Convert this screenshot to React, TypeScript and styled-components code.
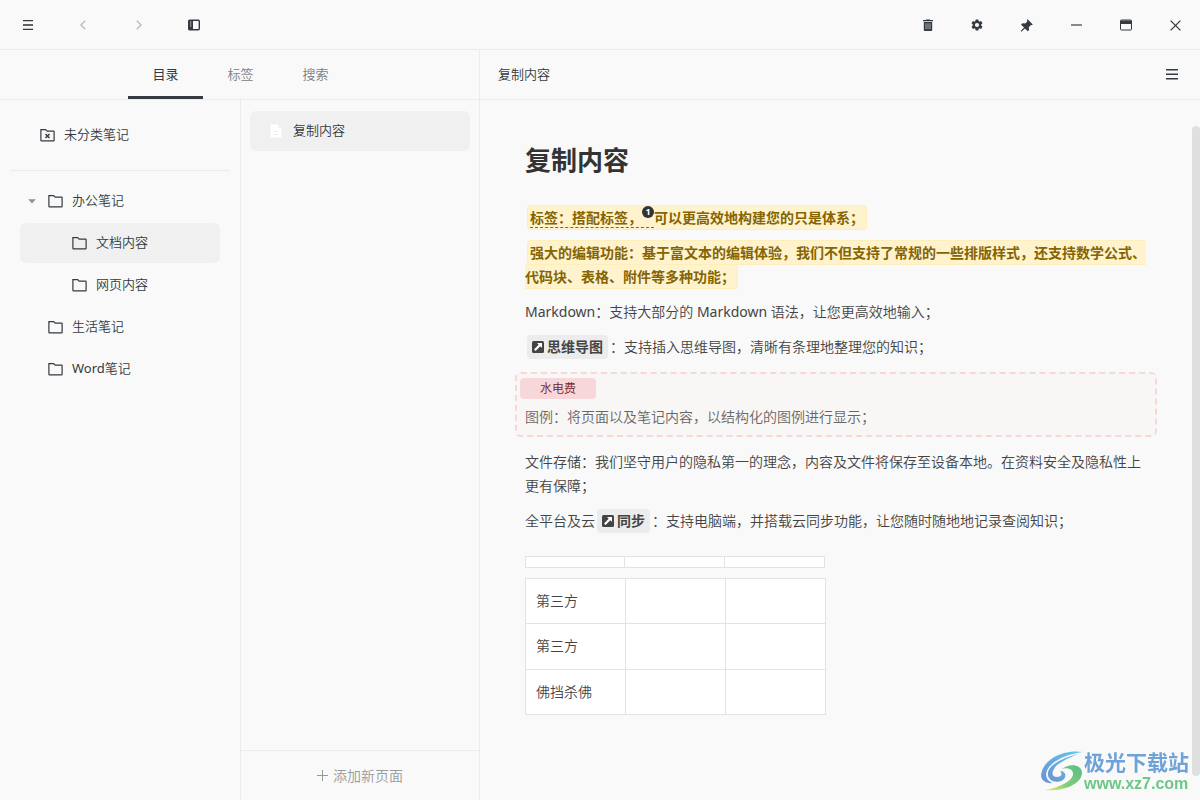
import React from "react";
import styled, { createGlobalStyle } from "styled-components";

const Global = createGlobalStyle`
  *, *::before, *::after { box-sizing: border-box; }
  html, body, #root { height: 100%; }
  body {
    margin: 0;
    background: #f9f9f9;
    color: #343a40;
    font: 350 13px/20px "Noto Sans", "Noto Sans CJK SC", sans-serif;
    overflow: hidden;
  }
  button {
    font: inherit;
    color: inherit;
    background: none;
    border: 0;
    padding: 0;
    cursor: pointer;
  }
  a { color: inherit; text-decoration: none; }
  svg { display: block; flex: none; }
`;

const line = "#ebebeb";

const Shell = styled.div`
  height: 100vh;
  display: flex;
  flex-direction: column;
`;

const TitleBar = styled.header`
  display: flex;
  justify-content: space-between;
  flex: none;
  height: 50px;
  border-bottom: 1px solid ${line};
`;

const ButtonGroup = styled.div`
  display: flex;
  align-items: center;
  gap: 6px;
`;

const WindowControls = styled.div`
  flex: 0 0 297px;
  display: grid;
  grid-template-columns: repeat(6, 1fr);
  justify-items: center;
`;

const IconButton = styled.button<{ $width?: number; $muted?: boolean }>`
  width: ${(p) => p.$width ?? 48}px;
  height: 50px;
  display: flex;
  align-items: center;
  justify-content: center;
  color: ${(p) => (p.$muted ? "#bcbec0" : "#343a40")};
`;

const Body = styled.div`
  flex: 1;
  min-height: 0;
  display: flex;
`;

const Navigator = styled.div`
  flex: 0 0 480px;
  display: flex;
  flex-direction: column;
  border-right: 1px solid ${line};
`;

const Tabs = styled.div`
  flex: none;
  height: 50px;
  display: flex;
  justify-content: center;
  padding-left: 2px;
  border-bottom: 1px solid ${line};
`;

const Tab = styled.button<{ $active?: boolean }>`
  width: 75px;
  border-bottom: 3px solid ${(p) => (p.$active ? "#343a40" : "transparent")};
  border-top: 2px solid transparent;
  color: ${(p) => (p.$active ? "#343a40" : "#7a7e83")};
  font-weight: ${(p) => (p.$active ? 400 : 350)};
`;

const Panels = styled.div`
  flex: 1;
  min-height: 0;
  display: flex;
`;

const Sidebar = styled.nav`
  flex: 0 0 241px;
  border-right: 1px solid ${line};
`;

const SidebarTop = styled.div`
  margin: 0 10px;
  padding: 15px 10px;
  border-bottom: 1px solid ${line};
`;

const Tree = styled.ul`
  list-style: none;
  margin: 0;
  padding: 10px 20px;
  display: flex;
  flex-direction: column;
  gap: 2px;
`;

const TreeRow = styled.button<{ $depth?: number; $active?: boolean }>`
  width: 100%;
  height: 40px;
  display: flex;
  align-items: center;
  gap: 9px;
  padding-left: ${(p) => 3 + (p.$depth ?? 0) * 24}px;
  border-radius: 6px;
  background: ${(p) => (p.$active ? "#f0f0f0" : "transparent")};
`;

const UncategorisedRow = styled(TreeRow)`
  padding-left: 20px;
`;

const Label = styled.span`
  padding-bottom: 2px;
`;

const Latin = styled.span`
  font-weight: 400;
`;

const Caret = styled.span<{ $shown?: boolean }>`
  width: 18px;
  display: flex;
  justify-content: center;
  margin-right: -2px;
  visibility: ${(p) => (p.$shown ? "visible" : "hidden")};
`;

const PageColumn = styled.section`
  flex: 1;
  display: flex;
  flex-direction: column;
`;

const PageList = styled.div`
  flex: 1;
  padding: 11px 9px;
`;

const PageItem = styled.button`
  width: 100%;
  height: 40px;
  padding: 0 17px;
  display: flex;
  align-items: center;
  gap: 8px;
  border-radius: 6px;
  background: #f0f0f0;
`;

const AddPage = styled.button`
  flex: none;
  height: 50px;
  display: flex;
  align-items: center;
  justify-content: center;
  gap: 5px;
  border-top: 1px solid ${line};
  color: #999999;
  font-size: 14px;
`;

const Main = styled.main`
  flex: 1;
  min-width: 0;
  display: flex;
  flex-direction: column;
`;

const PageBar = styled.div`
  flex: none;
  height: 50px;
  padding-left: 18px;
  display: flex;
  align-items: center;
  justify-content: space-between;
  border-bottom: 1px solid ${line};
`;

const Scroller = styled.div`
  flex: 1;
  min-height: 0;
  display: flex;
`;

const Article = styled.article`
  flex: 1;
  min-width: 0;
  padding: 41px 45px 40px;
  color: #444444;
  font-size: 14px;
  line-height: 24px;
`;

const ScrollTrack = styled.div`
  flex: 0 0 8px;
  padding: 26px 0 24px;
`;

const ScrollThumb = styled.div`
  height: 100%;
  border-radius: 4px;
  background: #dfdfdf;
`;

const Title = styled.h1`
  margin: 0 0 27px;
  font-size: 26px;
  line-height: 38px;
  font-weight: 700;
  color: #333333;
`;

const Paragraph = styled.p`
  margin: 0 0 11px;
`;

const Highlight = styled.mark`
  margin: 0 2px;
  padding: 2px 2px;
  border: 1px solid #ffeeba;
  border-radius: 4px;
  background: #fff3cd;
  color: #856404;
  font-weight: 700;
`;

const Annotated = styled.span`
  border-bottom: 1px dashed #007bff;
`;

const NoteBadge = styled.sup`
  display: inline-flex;
  align-items: center;
  justify-content: center;
  width: 12px;
  height: 12px;
  border-radius: 50%;
  background: #333333;
  color: #ffffff;
  font-size: 9px;
  line-height: 12px;
  vertical-align: 8px;
`;

const Chip = styled.a`
  display: inline-flex;
  align-items: center;
  gap: 3px;
  height: 24px;
  margin: 0 2px;
  padding: 0 5px;
  border-radius: 4px;
  background: #ececec;
  color: #444444;
  font-weight: 700;
  vertical-align: bottom;
`;

const Callout = styled.aside`
  margin: 13px -10px;
  padding: 4px 3px 6px;
  border: 2px dashed #f8d7da;
  border-radius: 6px;
  background: #f9f7f5;
  color: #666666;
`;

const CalloutLabel = styled.span`
  display: block;
  width: max-content;
  margin-bottom: 6px;
  padding: 0 20px;
  border-radius: 4px;
  background: #f8d7da;
  color: #721c24;
  font-size: 12px;
  line-height: 21px;
`;

const CalloutText = styled.p`
  margin: 0 5px;
`;

const HeadStrip = styled.div`
  display: grid;
  grid-template-columns: repeat(3, 1fr);
  width: 300px;
  height: 12px;
  margin: 23px 0 10px;
  border: 1px solid #e3e3e3;
  background: #ffffff;
`;

const HeadCell = styled.span`
  border-right: 1px solid #e3e3e3;
  &:last-child { border-right: 0; }
`;

const Table = styled.table`
  width: 301px;
  height: 137px;
  table-layout: fixed;
  border-collapse: collapse;
  background: #ffffff;

  td {
    padding: 10px;
    border: 1px solid #e3e3e3;
  }
`;

const Watermark = styled.a`
  position: fixed;
  right: 11px;
  bottom: 7px;
  display: flex;
  align-items: center;
`;

const WatermarkText = styled.span`
  display: flex;
  flex-direction: column;
`;

const WatermarkName = styled.strong`
  color: #6fa3d8;
  font-size: 21px;
  line-height: 26px;
  font-weight: 700;
`;

const WatermarkSite = styled.span`
  color: #6cc788;
  font: 700 16px/18px "Liberation Sans", sans-serif;
`;

const MenuIcon = () => (
  <svg width="10" height="10" viewBox="0 0 10 10">
    <path d="M0 0h10v1.300H0zM0 8.700h10V10H0z" fill="#343a40" />
    <path d="M0 4h10v2H0z" fill="#5c6166" />
  </svg>
);

const ListIcon = () => (
  <svg width="12" height="11" viewBox="0 0 12 11" fill="currentColor">
    <path d="M0 0h12v1.500H0zM0 4.500h12V6H0zM0 9h12v1.500H0z" />
  </svg>
);

const Chevron = ({ right }: { right?: boolean }) => (
  <svg width="6" height="10" viewBox="0 0 6 10" fill="none" stroke="currentColor" strokeWidth="1.5">
    <path d={right ? "M.8.8 5 5 .8 9.2" : "M5.2.8 1 5l4.2 4.2"} />
  </svg>
);

const SidebarIcon = () => (
  <svg width="12" height="12" viewBox="0 0 12 12">
    <rect x=".7" y="1.2" width="10.6" height="9.6" rx="1" fill="none" stroke="currentColor" strokeWidth="1.4" />
    <path d="M1 1.500h4v9H1z" fill="currentColor" />
    <path d="M2 3h1.300M2 5h1.300M2 7h1.300" stroke="#f9f9f9" strokeWidth=".8" />
  </svg>
);

const TrashIcon = () => (
  <svg width="10" height="12" viewBox="0 0 10 12" fill="currentColor">
    <path d="M3 .4h4l.4.6H10v1.200H0V1h2.600z" />
    <path d="M.8 3h8.400v8a1 1 0 0 1-1 1H1.800a1 1 0 0 1-1-1z" />
    <path d="M3 4.200v6M5 4.200v6M7 4.200v6" stroke="#f9f9f9" strokeWidth=".6" />
  </svg>
);

const GearIcon = () => (
  <svg width="14" height="14" viewBox="0 0 24 24" fill="currentColor">
    <path d="M19.140 12.940c.04-.3.060-.61.060-.94 0-.32-.02-.64-.07-.94l2.030-1.580a.49.49 0 0 0 .12-.61l-1.920-3.320a.488.488 0 0 0-.59-.22l-2.390.96c-.5-.38-1.030-.7-1.620-.94l-.36-2.540a.484.484 0 0 0-.48-.41h-3.840c-.24 0-.43.17-.47.41l-.36 2.540c-.59.24-1.130.57-1.620.94l-2.390-.96c-.22-.08-.47 0-.59.22L2.740 8.870c-.12.21-.08.47.12.61l2.030 1.580c-.05.3-.09.63-.09.94s.02.64.07.94l-2.030 1.580a.49.49 0 0 0-.12.61l1.920 3.320c.12.22.37.29.59.22l2.390-.96c.5.38 1.030.7 1.620.94l.36 2.540c.05.24.24.41.48.41h3.840c.24 0 .44-.17.47-.41l.36-2.540c.59-.24 1.130-.56 1.620-.94l2.390.96c.22.08.47 0 .59-.22l1.920-3.320a.49.49 0 0 0-.12-.61zM12 15.600A3.600 3.600 0 1 1 12 8.400a3.600 3.600 0 0 1 0 7.200z" />
  </svg>
);

const PinIcon = () => (
  <svg width="13" height="13" viewBox="0 0 12 12" fill="currentColor">
    <path d="M7 .2 11.800 5l-1 .8-.7-.2-2 2 .3 2.600-1.200 1.200-2.700-2.700-3.200 3-.6-.6 3-3.200L1 5.200 2.200 4l2.600.2 1.900-1.900-.3-1z" />
  </svg>
);

const MinimizeIcon = () => (
  <svg width="11" height="2" viewBox="0 0 11 2">
    <path d="M0 1h11" stroke="#858a8e" strokeWidth="2" />
  </svg>
);

const WindowIcon = () => (
  <svg width="12" height="12" viewBox="0 0 12 12">
    <rect x=".5" y="1" width="11" height="10" rx="1" fill="none" stroke="currentColor" />
    <path d="M.5 1.500h11V5H.5z" fill="currentColor" />
  </svg>
);

const CloseIcon = () => (
  <svg width="11" height="11" viewBox="0 0 11 11" stroke="currentColor" strokeWidth="1.3">
    <path d="m.6.6 9.8 9.8M10.4.6.6 10.4" />
  </svg>
);

const FolderIcon = ({ crossed }: { crossed?: boolean }) => (
  <svg width="15" height="14" viewBox="0 0 15 14" fill="none" stroke="currentColor" strokeWidth="1.2">
    <path d="M1 1.600h4.700L7.200 3.100h6.300a.6.6 0 0 1 .6.6v8.600a.6.6 0 0 1-.6.6H1.500a.6.6 0 0 1-.6-.6V1.600z" />
    {crossed && <path d="m5.500 6 4 4M9.500 6l-4 4" strokeWidth="1.5" />}
  </svg>
);

const CaretIcon = () => (
  <svg width="8" height="5" viewBox="0 0 8 5" fill="#8c8f92">
    <path d="M.3.3h7.400L4 4.500z" />
  </svg>
);

const FileIcon = () => (
  <svg width="18" height="18" viewBox="0 0 18 18">
    <path d="M4 2h7l4 4v9a1 1 0 0 1-1 1H4a1 1 0 0 1-1-1V3a1 1 0 0 1 1-1z" fill="#fff" stroke="#e9e9e9" strokeWidth=".5" />
    <path d="M11 2v4h4z" fill="#f4f4f4" />
    <path d="M6 9.500h5M6 12.500h5" stroke="#efefef" />
  </svg>
);

const PlusIcon = () => (
  <svg width="11" height="11" viewBox="0 0 11 11" stroke="currentColor">
    <path d="M5.500 0v11M0 5.500h11" />
  </svg>
);

const LinkIcon = () => (
  <svg width="12" height="12" viewBox="0 0 12 12">
    <rect width="12" height="12" rx="1.5" fill="#444" />
    <path d="M5 2h5v5L8.300 5.300 3.600 10 2 8.400l4.700-4.700z" fill="#fff" />
  </svg>
);

const SwirlLogo = () => (
  <svg width="44" height="42" viewBox="0 0 44 42">
    <defs>
      <linearGradient id="sky" x1="1" y1="0" x2="0" y2="1">
        <stop offset="0" stopColor="#63c7f0" />
        <stop offset="1" stopColor="#6a93cf" />
      </linearGradient>
      <linearGradient id="leaf" x1="1" y1="0" x2="0" y2="1">
        <stop offset="0" stopColor="#58be88" />
        <stop offset=".6" stopColor="#80cb7c" />
        <stop offset="1" stopColor="#f1ee72" />
      </linearGradient>
    </defs>
    <path d="M43 2C29 4 19 8 12 14 4 21 4 30 13 33 4 34-1 29 2 21 6 9 23-1 43 2z" fill="url(#sky)" />
    <path d="M38 4C22 8 9 15 8 23c-1 8 9 11 15 7 4-3 3-9-3-9 3 3 1 6-3 6s-6-3-3-8C17 13 27 9 38 4z" fill="url(#sky)" />
    <path d="M22 19c7-6 20-5 20 4 0 10-17 19-37 17 15-3 26-8 28-15 1-5-5-8-11-6z" fill="url(#leaf)" />
  </svg>
);

type Folder = { name: React.ReactNode; depth: number; open?: boolean; active?: boolean };

const folders: Folder[] = [
  { name: "办公笔记", depth: 0, open: true },
  { name: "文档内容", depth: 1, active: true },
  { name: "网页内容", depth: 1 },
  { name: "生活笔记", depth: 0 },
  { name: <><Latin>Word</Latin>笔记</>, depth: 0 },
];

const rows = ["第三方", "第三方", "佛挡杀佛"];

export default function App() {
  return (
    <Shell lang="zh-CN">
      <Global />
      <TitleBar>
        <ButtonGroup>
          <IconButton $width={56} aria-label="菜单"><MenuIcon /></IconButton>
          <IconButton $width={42} $muted aria-label="后退"><Chevron /></IconButton>
          <IconButton $width={58} $muted aria-label="前进"><Chevron right /></IconButton>
          <IconButton $width={40} aria-label="侧边栏"><SidebarIcon /></IconButton>
        </ButtonGroup>
        <WindowControls>
          <IconButton aria-label="回收站"><TrashIcon /></IconButton>
          <IconButton aria-label="设置"><GearIcon /></IconButton>
          <IconButton aria-label="置顶"><PinIcon /></IconButton>
          <IconButton aria-label="最小化"><MinimizeIcon /></IconButton>
          <IconButton aria-label="最大化"><WindowIcon /></IconButton>
          <IconButton aria-label="关闭"><CloseIcon /></IconButton>
        </WindowControls>
      </TitleBar>
      <Body>
        <Navigator>
          <Tabs role="tablist">
            <Tab role="tab" aria-selected $active>目录</Tab>
            <Tab role="tab">标签</Tab>
            <Tab role="tab">搜索</Tab>
          </Tabs>
          <Panels>
            <Sidebar>
              <SidebarTop>
                <UncategorisedRow><FolderIcon crossed /><Label>未分类笔记</Label></UncategorisedRow>
              </SidebarTop>
              <Tree>
                {folders.map((f, i) => (
                  <li key={i}>
                    <TreeRow $depth={f.depth} $active={f.active}>
                      <Caret $shown={f.open}><CaretIcon /></Caret>
                      <FolderIcon />
                      <Label>{f.name}</Label>
                    </TreeRow>
                  </li>
                ))}
              </Tree>
            </Sidebar>
            <PageColumn>
              <PageList>
                <PageItem><FileIcon /><Label>复制内容</Label></PageItem>
              </PageList>
              <AddPage><PlusIcon />添加新页面</AddPage>
            </PageColumn>
          </Panels>
        </Navigator>
        <Main>
          <PageBar>
            <Label>复制内容</Label>
            <IconButton $width={56} aria-label="页面菜单"><ListIcon /></IconButton>
          </PageBar>
          <Scroller>
            <Article>
              <Title>复制内容</Title>
              <Paragraph>
                <Highlight>
                  <Annotated>标签：搭配标签，<NoteBadge>1</NoteBadge></Annotated>可以更高效地构建您的只是体系；
                </Highlight>
              </Paragraph>
              <Paragraph>
                <Highlight>
                  强大的编辑功能：基于富文本的编辑体验，我们不但支持了常规的一些排版样式，还支持数学公式、代码块、表格、附件等多种功能；
                </Highlight>
              </Paragraph>
              <Paragraph>
                <Latin>Markdown</Latin>：支持大部分的 <Latin>Markdown</Latin> 语法，让您更高效地输入；
              </Paragraph>
              <Paragraph>
                <Chip href="#mindmap"><LinkIcon />思维导图</Chip>
                ：支持插入思维导图，清晰有条理地整理您的知识；
              </Paragraph>
              <Callout>
                <CalloutLabel>水电费</CalloutLabel>
                <CalloutText>图例：将页面以及笔记内容，以结构化的图例进行显示；</CalloutText>
              </Callout>
              <Paragraph>
                文件存储：我们坚守用户的隐私第一的理念，内容及文件将保存至设备本地。在资料安全及隐私性上更有保障；
              </Paragraph>
              <Paragraph>
                全平台及云<Chip href="#sync"><LinkIcon />同步</Chip>
                ：支持电脑端，并搭载云同步功能，让您随时随地地记录查阅知识；
              </Paragraph>
              <HeadStrip>
                <HeadCell /><HeadCell /><HeadCell />
              </HeadStrip>
              <Table>
                <tbody>
                  {rows.map((text, i) => (
                    <tr key={i}><td>{text}</td><td /><td /></tr>
                  ))}
                </tbody>
              </Table>
            </Article>
            <ScrollTrack><ScrollThumb /></ScrollTrack>
          </Scroller>
        </Main>
      </Body>
      <Watermark href="#site">
        <SwirlLogo />
        <WatermarkText>
          <WatermarkName>极光下载站</WatermarkName>
          <WatermarkSite>www.xz7.com</WatermarkSite>
        </WatermarkText>
      </Watermark>
    </Shell>
  );
}
